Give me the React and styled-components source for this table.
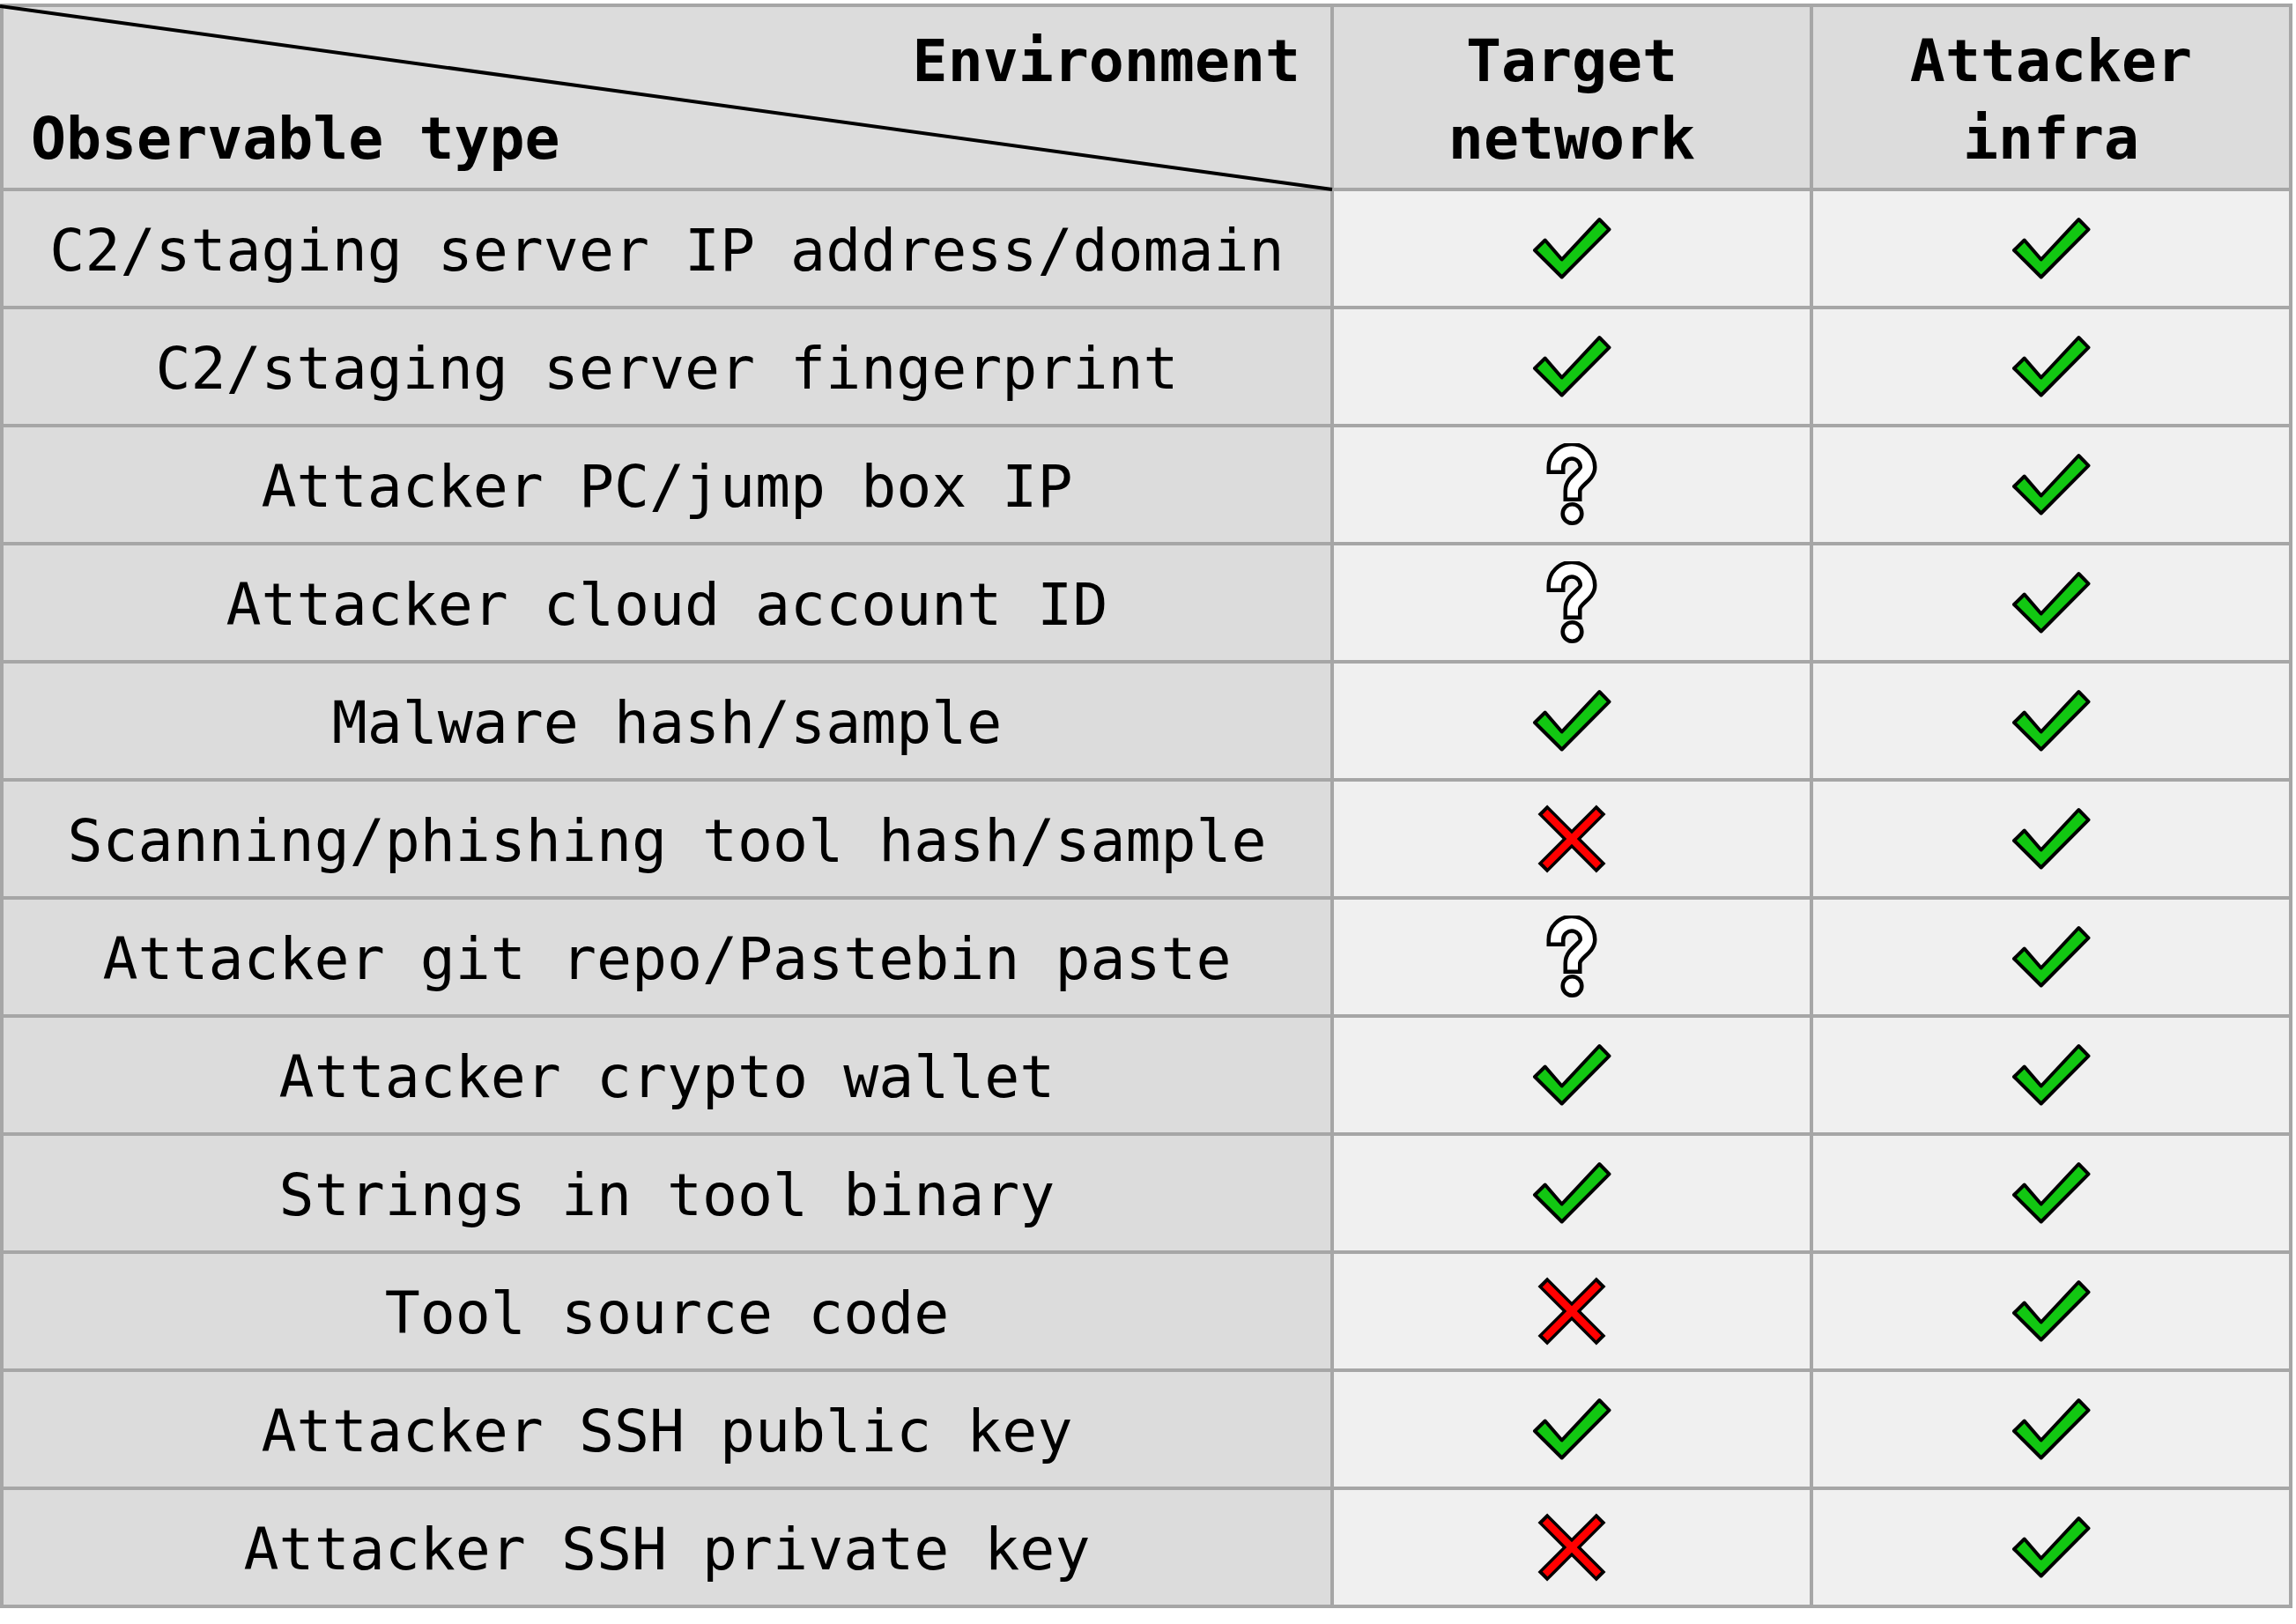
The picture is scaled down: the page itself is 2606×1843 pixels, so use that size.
import React from "react";
import styled, { createGlobalStyle } from "styled-components";

const GlobalStyle = createGlobalStyle`
  body {
    margin: 0;
    background: #ffffff;
  }
`;

const Table = styled.div`
  display: grid;
  grid-template-columns: 1506px 540px 540px;
  grid-template-rows: 205px repeat(12, 130px);
  gap: 4px;
  padding: 4px;
  width: max-content;
  margin-top: 4px;
  background: #a6a6a6;
  font-family: "DejaVu Sans Mono", "Liberation Mono", monospace;
  font-size: 66.5px;
  color: #000;
`;

const Cell = styled.div`
  display: flex;
  align-items: center;
  justify-content: center;
  text-align: center;
  white-space: nowrap;
  background: ${(p) => (p.$light ? "#f0f0f0" : "#dcdcdc")};
`;

const HeadCell = styled(Cell)`
  font-weight: bold;
  line-height: 88px;
  padding-top: 5px;
  box-sizing: border-box;
`;

const CornerCell = styled(HeadCell)`
  position: relative;
  flex-direction: column;
  align-items: stretch;
  padding: 5px 34px 0 31px;
`;

const CornerTop = styled.div`
  text-align: right;
`;

const CornerBottom = styled.div`
  text-align: left;
`;

const Diagonal = styled.svg`
  position: absolute;
  left: -4px;
  top: -4px;
  overflow: visible;
`;

const Label = styled(Cell)`
  padding-top: 4px;
  box-sizing: border-box;
`;

function Check() {
  return (
    <svg width="92" height="74" viewBox="-1 -1 92 74">
      <polygon
        points="3,38 14.7,26.5 33.7,48.5 76.3,3 87.5,14.3 33.7,68.5"
        fill="#12c712"
        stroke="#000"
        strokeWidth="4"
        strokeLinejoin="round"
      />
    </svg>
  );
}

function Cross() {
  return (
    <svg width="78" height="78" viewBox="0 0 78 78">
      <g stroke="#000" strokeWidth="15" strokeLinecap="butt">
        <line x1="5.8" y1="5.8" x2="72.2" y2="72.2" />
        <line x1="72.2" y1="5.8" x2="5.8" y2="72.2" />
      </g>
      <g stroke="#ff0000" strokeWidth="8" strokeLinecap="butt">
        <line x1="8.6" y1="8.6" x2="69.4" y2="69.4" />
        <line x1="69.4" y1="8.6" x2="8.6" y2="69.4" />
      </g>
    </svg>
  );
}

function Question() {
  const hook = "L 11 27.3 A 18 18 0 0 1 47 27.3 C 47 38, 30 42, 30 54";
  return (
    <svg width="58" height="94" viewBox="0 0 58 94">
      <path d={`M 11 35 ${hook} L 30 66`} fill="none" stroke="#000" strokeWidth="21" />
      <path d={`M 11 30.5 ${hook} L 30 61.5`} fill="none" stroke="#fff" strokeWidth="12" />
      <circle cx="29.5" cy="80" r="10.8" fill="#fff" stroke="#000" strokeWidth="4.6" />
    </svg>
  );
}

const marks = { y: <Check />, n: <Cross />, q: <Question /> };

const rows = [
  ["C2/staging server IP address/domain", "y", "y"],
  ["C2/staging server fingerprint", "y", "y"],
  ["Attacker PC/jump box IP", "q", "y"],
  ["Attacker cloud account ID", "q", "y"],
  ["Malware hash/sample", "y", "y"],
  ["Scanning/phishing tool hash/sample", "n", "y"],
  ["Attacker git repo/Pastebin paste", "q", "y"],
  ["Attacker crypto wallet", "y", "y"],
  ["Strings in tool binary", "y", "y"],
  ["Tool source code", "n", "y"],
  ["Attacker SSH public key", "y", "y"],
  ["Attacker SSH private key", "n", "y"],
];

export default function App() {
  return (
    <>
      <GlobalStyle />
      <Table>
        <CornerCell>
          <Diagonal width="1514" height="213">
            <line x1="0" y1="3" x2="1512" y2="211" stroke="#000" strokeWidth="4" />
          </Diagonal>
          <CornerTop>Environment</CornerTop>
          <CornerBottom>Observable type</CornerBottom>
        </CornerCell>
        <HeadCell>
          Target
          <br />
          network
        </HeadCell>
        <HeadCell>
          Attacker
          <br />
          infra
        </HeadCell>
        {rows.map(([label, target, infra]) => (
          <React.Fragment key={label}>
            <Label>{label}</Label>
            <Cell $light>{marks[target]}</Cell>
            <Cell $light>{marks[infra]}</Cell>
          </React.Fragment>
        ))}
      </Table>
    </>
  );
}
